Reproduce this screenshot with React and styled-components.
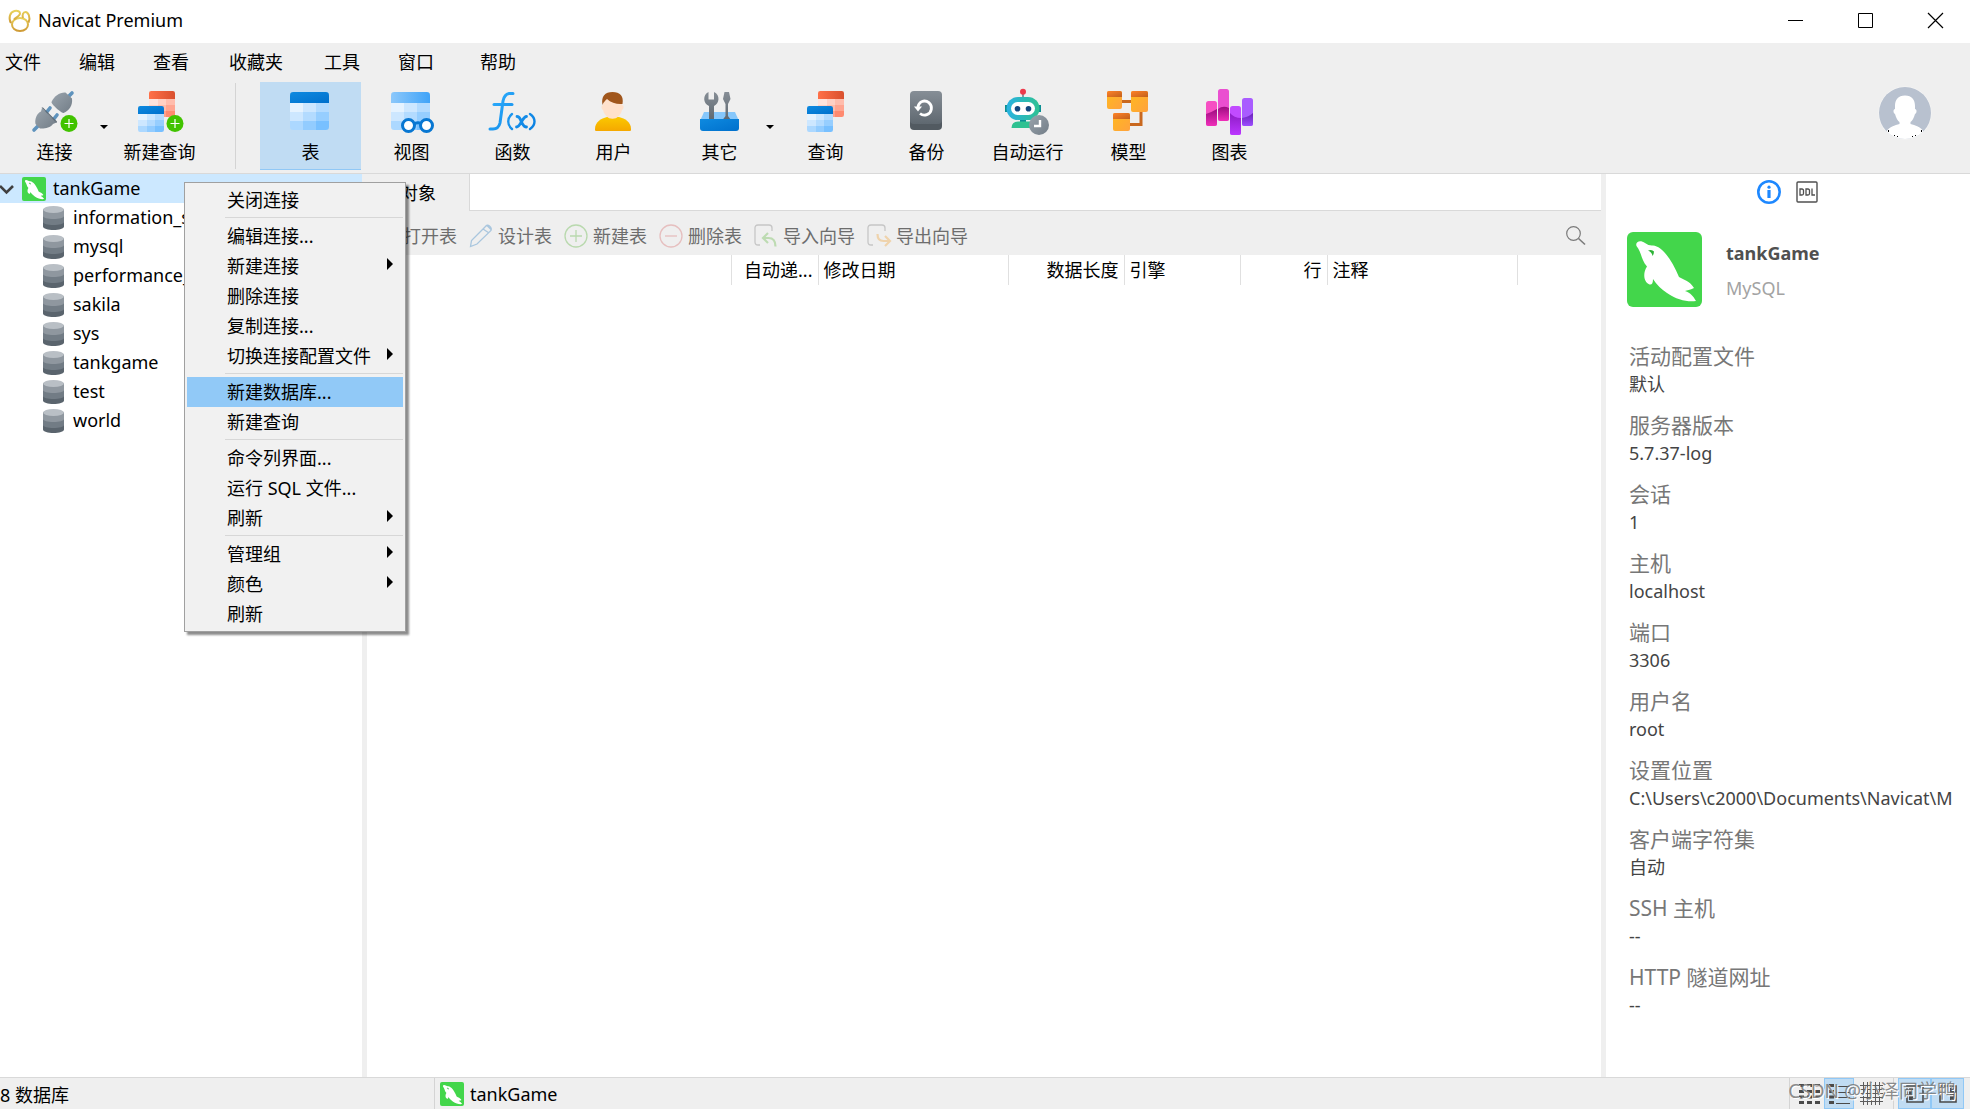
import React from "react";
import styled, { createGlobalStyle, css } from "styled-components";

const GlobalStyle = createGlobalStyle`
  *, *::before, *::after { box-sizing: border-box; }
  body {
    margin: 0;
    color: #000;
    background: #fff;
    font-family: "Noto Sans", "Noto Sans CJK SC", sans-serif;
    font-size: 18px;
    line-height: 24px;
  }
  button {
    font: inherit;
    color: inherit;
    background: none;
    border: 0;
    padding: 0;
    cursor: default;
  }
  ul, dl, dd, h2, p { margin: 0; padding: 0; }
  ul { list-style: none; }
  svg { display: block; overflow: visible; flex: none; }
`;

const Window = styled.div`
  display: flex;
  flex-direction: column;
  height: 100vh;
  overflow: hidden;
`;

/* ---------- title bar ---------- */

const TitleBar = styled.header`
  display: flex;
  align-items: center;
  height: 43px;
  flex: none;
  padding-left: 8px;
  gap: 6px;
  background: #fff;
`;

const AppName = styled.span`
  flex: 1;
  line-height: 40px;
  height: 43px;
`;

const WindowControls = styled.div`
  display: flex;
`;

const WindowButton = styled.button`
  display: grid;
  place-items: center;
  width: 70px;
  height: 43px;
  padding-bottom: 2px;
`;

/* ---------- menu bar and ribbon ---------- */

const MenuBar = styled.nav`
  display: grid;
  grid-template-columns: 74px 74px 76px 95px 74px 82px auto;
  justify-content: start;
  height: 39px;
  flex: none;
  padding-left: 5px;
  background: #efefef;
`;

const MenuBarItem = styled.button`
  text-align: left;
  line-height: 39px;
`;

const Ribbon = styled.div`
  display: flex;
  height: 92px;
  flex: none;
  padding-bottom: 3px;
  background: #efefef;
  border-bottom: 1px solid #d9d9d9;
`;

const RibbonButton = styled.button`
  position: relative;
  display: flex;
  flex-direction: column;
  align-items: center;
  gap: 5px;
  width: ${(p) => p.$width || 101}px;
  padding-top: 5px;
  white-space: nowrap;
  ${(p) =>
    p.$active &&
    css`
      background: #c0dcf3;
      box-shadow: inset 0 -1px #90c8f6;
    `}
`;

const Caret = styled.span`
  position: absolute;
  right: 1px;
  top: 43px;
  border: 4px solid transparent;
  border-top-color: #000;
  border-bottom: 0;
`;

const RibbonSeparator = styled.div`
  width: 50px;
  display: flex;
  justify-content: center;
  &::after {
    content: "";
    width: 1px;
    margin: 1px 0;
    background: #d4d4d4;
  }
`;

const Account = styled.button`
  margin: 0 38px 26px auto;
`;

/* ---------- workspace ---------- */

const Workspace = styled.div`
  display: flex;
  flex: 1;
  min-height: 0;
`;

const Sidebar = styled.aside`
  position: relative;
  width: 367px;
  flex: none;
  border-right: 5px solid #efefef;
`;

const ConnectionRow = styled.div`
  display: flex;
  align-items: center;
  height: 29px;
  line-height: 22px;
  background: #cce8ff;
`;

const ConnectionIcon = styled.span`
  margin: 0 7px 0 9px;
`;

const DatabaseRow = styled.li`
  display: flex;
  align-items: center;
  gap: 9px;
  height: 29px;
  padding-left: 43px;
`;

const RowText = styled.span`
  padding-bottom: 2px;
`;

const Main = styled.main`
  display: flex;
  flex-direction: column;
  flex: 1;
  min-width: 0;
`;

const TabStrip = styled.div`
  display: flex;
  height: 37px;
  flex: none;
`;

const Tab = styled.button`
  width: 102px;
  background: #efefef;
`;

const TabFiller = styled.div`
  flex: 1;
  border-left: 1px solid #d9d9d9;
  border-bottom: 1px solid #d9d9d9;
`;

const ObjectToolbar = styled.div`
  display: flex;
  align-items: center;
  gap: 12px;
  height: 44px;
  flex: none;
  padding: 6px 15px 0 7px;
  background: #efefef;
  color: #6d6d6d;
`;

const ObjectButton = styled.button`
  display: flex;
  align-items: center;
  gap: 5px;
  white-space: nowrap;
`;

const SearchButton = styled.button`
  margin-left: auto;
`;

const ObjectTable = styled.table`
  width: 100%;
  table-layout: fixed;
  border-collapse: collapse;
`;

const HeaderCell = styled.th`
  width: ${(p) => (p.$width ? `${p.$width}px` : "auto")};
  height: 30px;
  padding: 0 5px;
  font-weight: 400;
  line-height: 30px;
  text-align: ${(p) => p.$align || "left"};
  white-space: nowrap;
  border-right: ${(p) => (p.$width ? "1px solid #e0e0e0" : "0")};
`;

/* ---------- information pane ---------- */

const InfoPane = styled.aside`
  width: 369px;
  flex: none;
  border-left: 5px solid #efefef;
  overflow: hidden;
`;

const InfoTabs = styled.div`
  display: flex;
  justify-content: center;
  align-items: center;
  gap: 15px;
  height: 36px;
  padding-right: 2px;
`;

const Summary = styled.div`
  display: flex;
  gap: 24px;
  padding: 22px 0 0 21px;
`;

const SummaryName = styled.h2`
  padding-top: 3px;
  font-size: 18px;
  line-height: 36px;
  font-weight: 700;
  color: #505050;
`;

const SummaryKind = styled.p`
  line-height: 34px;
  color: #a3a3a3;
`;

const Details = styled.dl`
  display: grid;
  gap: 13px;
  padding: 35px 0 0 23px;
`;

const DetailLabel = styled.dt`
  font-size: 21px;
  line-height: 28px;
  color: #777;
`;

const DetailValue = styled.dd`
  line-height: 28px;
  color: #444;
  white-space: nowrap;
`;

/* ---------- status bar ---------- */

const StatusBar = styled.footer`
  position: relative;
  display: flex;
  height: 32px;
  flex: none;
  line-height: 34px;
  background: #efefef;
  border-top: 1px solid #d9d9d9;
`;

const StatusCount = styled.span`
  width: 434px;
`;

const StatusConnection = styled.span`
  display: flex;
  flex: 1;
  align-items: center;
  gap: 6px;
  padding-left: 5px;
  border-left: 1px solid #d4d4d4;
`;

const ViewSwitch = styled.div`
  display: flex;
  border-left: 1px solid #d4d4d4;
  padding: 0 ${(p) => p.$end || 4}px 0 4px;
`;

const ViewButton = styled.button`
  display: grid;
  place-items: center;
  width: ${(p) => p.$width || 30}px;
  ${(p) =>
    p.$active &&
    css`
      background: #c0dcf3;
      border: 1px solid #90c8f6;
    `}
`;

const Watermark = styled.span`
  position: absolute;
  right: 14px;
  top: -4px;
  font-size: 19px;
  color: rgba(110, 110, 110, 0.8);
  text-shadow: 1px 1px #fff;
  pointer-events: none;
`;

/* ---------- context menu ---------- */

const ContextMenu = styled.ul`
  position: absolute;
  z-index: 2;
  left: 184px;
  top: 8px;
  width: 222px;
  padding: 2px;
  background: #f1f1f1;
  border: 1px solid #a0a0a0;
  box-shadow: 3px 3px 2px rgba(0, 0, 0, 0.45);
`;

const ContextItem = styled.button`
  display: flex;
  align-items: center;
  justify-content: space-between;
  width: 100%;
  height: 30px;
  padding: 0 10px 0 40px;
  white-space: nowrap;
  background: ${(p) => (p.$active ? "#91c9f7" : "none")};
`;

const SubmenuArrow = styled.span`
  margin-bottom: 4px;
  border: 6px solid transparent;
  border-left-color: #000;
  border-right: 0;
`;

const ContextDivider = styled.li`
  height: 6px;
  margin-left: 38px;
  padding-top: 2px;
  &::after {
    content: "";
    display: block;
    height: 1px;
    background: #d7d7d7;
  }
`;

/* ---------- icons ---------- */

const GradientDefs = styled.svg`
  position: absolute;
`;

const Gradients = () => (
  <GradientDefs width="0" height="0" aria-hidden="true">
    <defs>
      <linearGradient id="gold" x1="0" y1="0" x2="0" y2="1">
        <stop offset="0" stopColor="#e9d25b" />
        <stop offset="1" stopColor="#cf9a35" />
      </linearGradient>
      <linearGradient id="steel" x1="0" y1="0" x2="1" y2="1">
        <stop offset="0" stopColor="#9aa4ad" />
        <stop offset="1" stopColor="#727d87" />
      </linearGradient>
      <linearGradient id="slate" x1="0" y1="0" x2="0" y2="1">
        <stop offset="0" stopColor="#868e96" />
        <stop offset="1" stopColor="#5f6870" />
      </linearGradient>
      <linearGradient id="blue" x1="0" y1="0" x2="1" y2="1">
        <stop offset="0" stopColor="#0e8ae0" />
        <stop offset="1" stopColor="#0070cc" />
      </linearGradient>
      <linearGradient id="sky" x1="0" y1="0" x2="1" y2="0">
        <stop offset="0" stopColor="#8cc8fb" />
        <stop offset="1" stopColor="#3fa3f8" />
      </linearGradient>
      <linearGradient id="red" x1="0" y1="0" x2="1" y2="0">
        <stop offset="0" stopColor="#ff7048" />
        <stop offset="1" stopColor="#d9502e" />
      </linearGradient>
      <linearGradient id="fx" gradientUnits="userSpaceOnUse" x1="0" y1="5" x2="46" y2="43">
        <stop offset="0" stopColor="#2fb0ff" />
        <stop offset="1" stopColor="#0a7fe0" />
      </linearGradient>
      <linearGradient id="shirt" x1="0" y1="0" x2="0" y2="1">
        <stop offset="0" stopColor="#fbc800" />
        <stop offset="1" stopColor="#f5a800" />
      </linearGradient>
      <linearGradient id="robot" x1="0" y1="0" x2="1" y2="0">
        <stop offset="0" stopColor="#29b2e2" />
        <stop offset="1" stopColor="#2fc191" />
      </linearGradient>
      <linearGradient id="amber" x1="0" y1="0" x2="1" y2="1">
        <stop offset="0" stopColor="#ffb91e" />
        <stop offset="1" stopColor="#ffa23e" />
      </linearGradient>
      <linearGradient id="rust" x1="0" y1="0" x2="1" y2="1">
        <stop offset="0" stopColor="#ff8229" />
        <stop offset="1" stopColor="#c2601c" />
      </linearGradient>
      <linearGradient id="magenta" x1="0" y1="0" x2="0" y2="1">
        <stop offset="0" stopColor="#9c0c80" />
        <stop offset="1" stopColor="#f02fba" />
      </linearGradient>
      <linearGradient id="violet" x1="0" y1="0" x2="0" y2="1">
        <stop offset="0" stopColor="#8d1cc4" />
        <stop offset="1" stopColor="#bb36ff" />
      </linearGradient>
      <linearGradient id="indigo" x1="0" y1="0" x2="0" y2="1">
        <stop offset="0" stopColor="#6a22b8" />
        <stop offset="1" stopColor="#9c4dff" />
      </linearGradient>
    </defs>
  </GradientDefs>
);

const Icon48 = ({ children }) => (
  <svg width="48" height="48" viewBox="0 0 48 48" fill="none" aria-hidden="true">
    {children}
  </svg>
);

const BLUES = ["#e6f3ff", "#cde7ff", "#b3dbff", "#cde7ff", "#b3dbff", "#96ceff", "#acd8ff", "#92ccff", "#78c0ff"];
const REDS = ["#ffe3dc", "#ffd0c4", "#ffbcac", "#ffd0c4", "#ffbcac", "#ffa591", "#ffbcac", "#ffa08b", "#ff8a70"];

const Grid = ({ id, x, y, w, h, head, headFill, cells }) => {
  const cw = w / 3;
  const ch = (h - head) / 3;
  return (
    <g>
      <clipPath id={id}>
        <rect x={x} y={y} width={w} height={h} rx={w / 12} />
      </clipPath>
      <g clipPath={`url(#${id})`} shapeRendering="crispEdges">
        {cells.map((c, i) => (
          <rect
            key={i}
            x={x + (i % 3) * cw}
            y={y + head + Math.floor(i / 3) * ch}
            width={cw}
            height={ch}
            fill={c}
          />
        ))}
        <rect x={x} y={y} width={w} height={head} fill={`url(#${headFill})`} />
      </g>
    </g>
  );
};

const PlusBadge = ({ x, y }) => (
  <g>
    <circle cx={x} cy={y} r="8.5" fill="#41c300" />
    <path d={`M${x - 4.5} ${y}h9M${x} ${y - 4.5}v9`} stroke="#fff" strokeWidth="1.2" />
  </g>
);

const ConnectIcon = () => (
  <Icon48>
    <g stroke="#5f93bd" strokeWidth="3.6" strokeLinecap="round">
      <path d="M41 6l-5 5M3 43l5-5M19 21l-4 5M26 28l-4 5" />
    </g>
    <path d="M20.500 15C23 9 29 5 34.500 5.500L41 11.500C42 18 38 24 32.500 26C30 26 20 17 20.500 15Z" fill="url(#steel)" />
    <path d="M11 21L25.500 35.500L22 37C19 41 13 42 9 41.500L4.500 37C3.500 32 6 26 10 24.500Z" fill="url(#steel)" />
    <path d="M10.500 20.500L12 20.500L26 34.500L25.500 36Z" fill="#606b75" />
    <PlusBadge x={38} y={36.5} />
  </Icon48>
);

const QueryTables = ({ x, id }) => (
  <g>
    <Grid id={`${id}r`} x={x + 11} y={4} w={26} h={26} head={8} headFill="red" cells={REDS} />
    <Grid id={`${id}b`} x={x} y={19} w={26} h={26} head={8} headFill="blue" cells={BLUES} />
  </g>
);

const NewQueryIcon = () => (
  <Icon48>
    <QueryTables x={2} id="nq" />
    <PlusBadge x={39} y={36.5} />
  </Icon48>
);

const QueryIcon = () => (
  <Icon48>
    <QueryTables x={5} id="q" />
  </Icon48>
);

const TableIcon = () => (
  <Icon48>
    <Grid id="tbl" x={3} y={5} w={39} h={38} head={11} headFill="blue" cells={BLUES} />
  </Icon48>
);

const ViewIcon = () => (
  <Icon48>
    <Grid id="vw" x={3} y={5} w={39} h={38} head={11} headFill="sky" cells={BLUES} />
    <g fill="#fff" stroke="#0877d2" strokeWidth="3">
      <path d="M26 37q4-2.500 8 0" fill="none" />
      <circle cx="20.500" cy="38.500" r="6" />
      <circle cx="38.500" cy="38.500" r="6" />
    </g>
  </Icon48>
);

const FunctionIcon = () => (
  <Icon48>
    <g stroke="url(#fx)" strokeWidth="3" strokeLinecap="round">
      <path d="M1 42h3c4 0 6-2 7-6l3-22c1-5 3-7 6-7.500h4" />
      <path d="M5 17.600h18" />
      <path d="M23 27c-5 4-5 11 0 15M41 27c6 4 6 11 0 15" strokeWidth="2.400" />
      <path d="M28 29.500c3 0 3 3 4.500 5.500s2 5 5 5M37.500 29.500c-4 0-6 10.500-10 10.500" strokeWidth="2.800" />
    </g>
  </Icon48>
);

const UserIcon = () => (
  <Icon48>
    <path d="M6 44c-1 0-1-1-1-2c0-7 6-10.500 12-12h12c6 1.500 12 5 12 12c0 1 0 2-1 2Z" fill="url(#shirt)" />
    <path d="M13 12h19v6c2 0 2 4 0 5c-1 4-3 6-4 6.500c-2 3-9 3-11 0c-1-.5-3-2.500-4-6.500c-2-1-2-5 0-5Z" fill="#ffe1cc" />
    <path d="M12.500 18C11 9 15 5 22.500 5S34 9 32.500 17C27 17.500 21 16 17 12C15 14 13.500 15 12.500 18Z" fill="#a0561c" />
  </Icon48>
);

const OthersIcon = () => (
  <Icon48>
    <path d="M8 25h31l4 9H4Z" fill="#86c7fb" />
    <path d="M13 33V19C7 16.500 6.500 8 12.500 5v7.500h5.500V5C24.500 8 23.500 16.500 18 19v14Z" fill="url(#slate)" />
    <path d="M28.500 5h4.500l1.500 7l-2.500 5v12l3 4h-8.500l3-4V17l-2.500-5Z" fill="url(#slate)" />
    <path d="M4 32h39v9q0 3-3 3H7q-3 0-3-3Z" fill="url(#blue)" />
  </Icon48>
);

const BackupIcon = () => (
  <Icon48>
    <rect x="7" y="6" width="32" height="37" rx="4" fill="#525a61" />
    <rect x="7" y="4" width="32" height="33" rx="4" fill="url(#slate)" />
    <path d="M19 14.500a7 7 0 1 1-2 12M15 22v-1.500a7 7 0 0 1 4-6" stroke="#fff" strokeWidth="2.800" />
    <path d="M11 19.500h8l-4 5Z" fill="#fff" />
  </Icon48>
);

const RobotIcon = () => (
  <Icon48>
    <path d="M19 6v6" stroke="#8a949c" strokeWidth="2" />
    <circle cx="19" cy="4.700" r="3" fill="#ee3a4b" />
    <path d="M1 18h4v7h-4zM33 18h4v7h-4zM16 30h6v5h-6z" fill="#0c8f93" />
    <path d="M7.500 41q0-6.500 7-6.500h14V41Z" fill="#2fc191" />
    <rect x="2.500" y="10" width="33" height="23" rx="11.500" fill="url(#robot)" />
    <rect x="7" y="15" width="24" height="13" rx="6.500" fill="#fff" />
    <circle cx="13.500" cy="21.700" r="2.800" fill="#12477f" />
    <circle cx="24.500" cy="21.700" r="2.800" fill="#12477f" />
    <circle cx="35" cy="38" r="10" fill="url(#steel)" />
    <path d="M36 33v6h-6" stroke="#fff" strokeWidth="2.400" />
  </Icon48>
);

const ModelBox = ({ x, y, w, h }) => (
  <g>
    <rect x={x} y={y} width={w} height={h} rx="2" fill="url(#amber)" />
    <path d={`M${x} ${y + 6}v-4q0-2 2-2h${w - 4}q2 0 2 2v4Z`} fill="url(#rust)" />
  </g>
);

const ModelIcon = () => (
  <Icon48>
    <path d="M17 14.500h10M36 24v13.500H25" stroke="#c9681f" strokeWidth="3" />
    <ModelBox x={2} y={4} w={15} h={18} />
    <ModelBox x={26} y={4} w={17} h={21} />
    <ModelBox x={8} y={26} w={17} h={18} />
  </Icon48>
);

const ChartIcon = () => (
  <Icon48>
    <rect x="0" y="14" width="11" height="25" rx="2.500" fill="#f64fc3" />
    <path d="M0 27q6-2 11-5v14.500q0 2.500-2.500 2.500h-6Q0 39 0 36.500Z" fill="url(#magenta)" />
    <rect x="12" y="2" width="11" height="32" rx="2.500" fill="#ea4fd0" />
    <path d="M12 22q5-4 11-1v10.500q0 2.500-2.500 2.500h-6q-2.500 0-2.500-2.500Z" fill="url(#magenta)" />
    <rect x="24" y="19" width="11" height="29" rx="2.500" fill="#c14bff" />
    <path d="M24 26q4 5 11 5v14.500q0 2.500-2.500 2.500h-6q-2.500 0-2.500-2.500Z" fill="url(#violet)" />
    <rect x="36" y="11" width="11" height="28" rx="2.500" fill="#a95cff" />
    <path d="M36 31q7-1 11-5v10.500q0 2.500-2.500 2.500h-6q-2.500 0-2.500-2.500Z" fill="url(#indigo)" />
  </Icon48>
);

const NavicatLogo = () => (
  <svg width="24" height="24" viewBox="0 1 24 24" fill="none" stroke="url(#gold)" strokeWidth="2" aria-hidden="true">
    <path d="M12 9c5 0 8 3 8 6.500s-3 6.500-8 6.500s-8-3-8-6.500s3-6.500 8-6.500Z" />
    <path d="M3 14C0 9 2 3 6.500 2c3.500-.6 5.500 .5 5.500 2.500S9 8 6 10.500M15 9c-1-3 0-6 2.500-6S23 8 20.500 13.500" />
  </svg>
);

const Dolphin = ({ size }) => (
  <svg width={size} height={size} viewBox="0 0 75 75" aria-hidden="true">
    <rect width="75" height="75" rx="6" fill="#43d64b" />
    <path
      d="M9.500 14C8 10 13 7.500 18 11Q22 14 26 13.500C35 14 45 28 52 45C57 48 63 49 67 56C63 58 60 58 58 59C64 61 66 64 69 69C60 70 50 68 40 61Q31 55 26 47C26 51 25 53 22.500 52.500C16 50 16 40 20 34.500C14 28 15 21 9.500 14Z"
      fill="#fff"
    />
    <path d="M21 18.500q4-1.500 6 1q0 2.500-1.500 4.500q-.5-4-4.500-5.500Z" fill="#2db336" />
  </svg>
);

const DatabaseIcon = () => (
  <svg width="21" height="24" viewBox="0 0 21 24" aria-hidden="true">
    <path d="M0 15v5.500C0 22.500 5 24 10.500 24S21 22.500 21 20.500V15Z" fill="#5a646d" />
    <path d="M0 9v7c0 2 5 3 10.500 3S21 18 21 16V9Z" fill="#727c85" />
    <path d="M0 3v7c0 2 5 3 10.500 3S21 12 21 10V3Z" fill="#8f979f" />
    <ellipse cx="10.500" cy="3.500" rx="10.500" ry="3.500" fill="#b9bfc5" />
  </svg>
);

const Icon24 = ({ color, children }) => (
  <svg width="24" height="24" viewBox="0 0 24 24" fill="none" stroke={color} strokeWidth="1.300" aria-hidden="true">
    {children}
  </svg>
);

const objectActions = [
  ["打开表", <Icon24 color="#a9c6de"><path d="M2 3h20v18H2zM2 9h20M9 9v12M16 9v12" /></Icon24>],
  ["设计表", <Icon24 color="#a9c6de"><path d="M1.500 22.500l1-6L16 3q2-3 4.500-1T22 6.500L8 20ZM14 5l6 4M18 1.500l4 4" /></Icon24>],
  ["新建表", <Icon24 color="#b9d9ae"><circle cx="12" cy="12" r="11" /><path d="M12 6v12M6 12h12" /></Icon24>],
  ["删除表", <Icon24 color="#e6bfbf"><circle cx="12" cy="12" r="11" /><path d="M6 12h12" /></Icon24>],
  ["导入向导", <Icon24 color="#c6c6c6"><path d="M6 21H4q-3 0-3-3V4q0-3 3-3h11q3 0 3 3v3" /><path d="M14 9l-5 5l5 5M9.500 14h5q7 0 7 8.500" stroke="#bddbb2" strokeWidth="2.200" /></Icon24>],
  ["导出向导", <Icon24 color="#c6c6c6"><path d="M6 21H4q-3 0-3-3V4q0-3 3-3h11q3 0 3 3v3" /><path d="M18 12l5 5l-5 5M22.500 17h-6q-6 0-6-7" stroke="#efd3ac" strokeWidth="2.200" /></Icon24>],
];

const ribbonTools = [
  ["表", TableIcon],
  ["视图", ViewIcon],
  ["函数", FunctionIcon],
  ["用户", UserIcon],
  ["其它", OthersIcon],
  ["查询", QueryIcon],
  ["备份", BackupIcon],
  ["自动运行", RobotIcon],
  ["模型", ModelIcon],
  ["图表", ChartIcon],
];

const databases = ["information_schema", "mysql", "performance_schema", "sakila", "sys", "tankgame", "test", "world"];

const contextEntries = [
  { label: "关闭连接" },
  null,
  { label: "编辑连接..." },
  { label: "新建连接", sub: true },
  { label: "删除连接" },
  { label: "复制连接..." },
  { label: "切换连接配置文件", sub: true },
  null,
  { label: "新建数据库...", active: true },
  { label: "新建查询" },
  null,
  { label: "命令列界面..." },
  { label: "运行 SQL 文件..." },
  { label: "刷新", sub: true },
  null,
  { label: "管理组", sub: true },
  { label: "颜色", sub: true },
  { label: "刷新" },
];

const columns = [
  ["", 364],
  ["自动递...", 87, "right"],
  ["修改日期", 190],
  ["数据长度", 116, "right"],
  ["引擎", 116],
  ["行", 87, "right"],
  ["注释", 190],
  ["", 0],
];

const details = [
  ["活动配置文件", "默认"],
  ["服务器版本", "5.7.37-log"],
  ["会话", "1"],
  ["主机", "localhost"],
  ["端口", "3306"],
  ["用户名", "root"],
  ["设置位置", "C:\\Users\\c2000\\Documents\\Navicat\\M"],
  ["客户端字符集", "自动"],
  ["SSH 主机", "--"],
  ["HTTP 隧道网址", "--"],
];

export default function App() {
  return (
    <Window>
      <GlobalStyle />
      <Gradients />
      <TitleBar>
        <NavicatLogo />
        <AppName>Navicat Premium</AppName>
        <WindowControls>
          <WindowButton aria-label="最小化">
            <svg width="15" height="15"><path d="M0 7.500h15" stroke="#000" /></svg>
          </WindowButton>
          <WindowButton aria-label="最大化">
            <svg width="15" height="15"><path d="M.5.5h14v14H.5z" fill="none" stroke="#000" /></svg>
          </WindowButton>
          <WindowButton aria-label="关闭">
            <svg width="15" height="15"><path d="M0 0l15 15M15 0L0 15" stroke="#000" strokeWidth="1.200" /></svg>
          </WindowButton>
        </WindowControls>
      </TitleBar>

      <MenuBar>
        {["文件", "编辑", "查看", "收藏夹", "工具", "窗口", "帮助"].map((m) => (
          <MenuBarItem key={m}>{m}</MenuBarItem>
        ))}
      </MenuBar>

      <Ribbon>
        <RibbonButton $width={109}>
          <ConnectIcon />
          连接
          <Caret />
        </RibbonButton>
        <RibbonButton>
          <NewQueryIcon />
          新建查询
        </RibbonButton>
        <RibbonSeparator />
        {ribbonTools.map(([label, Glyph]) => (
          <RibbonButton key={label} $active={label === "表"} $width={label === "其它" ? 111 : 101}>
            <Glyph />
            {label}
            {label === "其它" && <Caret />}
          </RibbonButton>
        ))}
        <Account aria-label="账户">
          <svg width="54" height="54" viewBox="0 0 54 54">
            <clipPath id="avatar"><circle cx="27" cy="27" r="26" /></clipPath>
            <circle cx="27" cy="27" r="26.500" fill="#f7f7f7" />
            <g clipPath="url(#avatar)">
              <rect width="54" height="54" fill="#b8c1cf" />
              <path
                d="M27 9.500C34 9.500 37 14 37 20V23C39 23 39 27 37 28C36 32 34 35 32.500 36V38C37 39 43 41 46 46V54H8V46C11 41 17 39 21.500 38V36C20 35 18 32 17 28C15 27 15 23 17 23V20C17 14 20 9.500 27 9.500Z"
                fill="#fff"
              />
            </g>
            <path d="M10 44h1v2h-1zM16 49h1v1h-1zM19 50h1v1h-1zM34 50h1v1h-1zM37 49h1v1h-1zM43 44h1v2h-1z" fill="#000" />
          </svg>
        </Account>
      </Ribbon>

      <Workspace>
        <Sidebar>
          <ConnectionRow>
            <svg width="13" height="14" viewBox="0 0 13 14" fill="none" stroke="#404040" strokeWidth="2.600">
              <path d="M0 4l6.500 6.500L13 4" />
            </svg>
            <ConnectionIcon><Dolphin size={24} /></ConnectionIcon>
            <RowText>tankGame</RowText>
          </ConnectionRow>
          <ul>
            {databases.map((d) => (
              <DatabaseRow key={d}>
                <DatabaseIcon />
                <RowText>{d}</RowText>
              </DatabaseRow>
            ))}
          </ul>
          <ContextMenu>
            {contextEntries.map((e, i) =>
              e ? (
                <li key={i}>
                  <ContextItem $active={e.active}>
                    {e.label}
                    {e.sub && <SubmenuArrow />}
                  </ContextItem>
                </li>
              ) : (
                <ContextDivider key={i} role="separator" />
              )
            )}
          </ContextMenu>
        </Sidebar>

        <Main>
          <TabStrip>
            <Tab>对象</Tab>
            <TabFiller />
          </TabStrip>
          <ObjectToolbar>
            {objectActions.map(([label, glyph]) => (
              <ObjectButton key={label}>
                {glyph}
                {label}
              </ObjectButton>
            ))}
            <SearchButton aria-label="搜索">
              <svg width="20" height="20" viewBox="0 0 20 20" fill="none" stroke="#7a7a7a" strokeWidth="1.200">
                <circle cx="7.500" cy="7.500" r="6.800" />
                <path d="M12.500 12.500l6.500 6" strokeWidth="1.600" />
              </svg>
            </SearchButton>
          </ObjectToolbar>
          <ObjectTable>
            <thead>
              <tr>
                {columns.map(([label, width, align], i) => (
                  <HeaderCell key={i} $width={width} $align={align}>
                    {label}
                  </HeaderCell>
                ))}
              </tr>
            </thead>
          </ObjectTable>
        </Main>

        <InfoPane>
          <InfoTabs>
            <button aria-label="常规">
              <svg width="24" height="24" viewBox="0 0 24 24" fill="none">
                <circle cx="12" cy="12" r="10.700" stroke="#1e88ff" strokeWidth="2.600" />
                <path d="M12 10v8" stroke="#1e88ff" strokeWidth="3.200" />
                <circle cx="12" cy="7.200" r="1.600" fill="#1e88ff" />
              </svg>
            </button>
            <button aria-label="DDL">
              <svg width="22" height="22" viewBox="0 0 22 22" fill="none" stroke="#505050">
                <rect x="1" y="1" width="20" height="20" rx="1" strokeWidth="1.400" />
                <path d="M4 8v6h2q1.500 0 1.500-1.500v-3Q7.500 8 6 8ZM10 8v6h2q1.500 0 1.500-1.500v-3Q13.500 8 12 8ZM16 7.500V14h3" strokeWidth="1.300" />
              </svg>
            </button>
          </InfoTabs>
          <Summary>
            <Dolphin size={75} />
            <div>
              <SummaryName>tankGame</SummaryName>
              <SummaryKind>MySQL</SummaryKind>
            </div>
          </Summary>
          <Details>
            {details.map(([label, value]) => (
              <div key={label}>
                <DetailLabel>{label}</DetailLabel>
                <DetailValue>{value}</DetailValue>
              </div>
            ))}
          </Details>
        </InfoPane>
      </Workspace>

      <StatusBar>
        <StatusCount>8 数据库</StatusCount>
        <StatusConnection>
          <Dolphin size={24} />
          tankGame
        </StatusConnection>
        <ViewSwitch>
          <ViewButton aria-label="图标">
            <svg width="21" height="20" fill="none" stroke="#4a4a4a" strokeWidth="3" strokeDasharray="5 3">
              <path d="M0 1.500h21M0 7.500h21M0 13h21M0 18.500h21" />
            </svg>
          </ViewButton>
          <ViewButton $active aria-label="列表">
            <svg width="21" height="20" fill="none" stroke="#4a4a4a">
              <path d="M0 1.500h5M0 7.500h5M0 13h5M0 18.500h5" strokeWidth="3" />
              <path d="M7 2.500h14M7 8.500h14M7 13.500h14M7 19.500h14" />
            </svg>
          </ViewButton>
          <ViewButton $width={35} aria-label="详细信息">
            <svg width="23" height="23" fill="none" stroke="#5c5c5c">
              <path d="M0 3.500h23M0 7.500h23M0 11.500h23M0 15.500h23M0 19.500h23M3.500 0v23M7.500 0v23M11.500 0v23M15.500 0v23M19.500 0v23" />
            </svg>
          </ViewButton>
        </ViewSwitch>
        <ViewSwitch $end={6}>
          <ViewButton $width={33} $active aria-label="左窗格">
            <svg width="18" height="18" fill="none" stroke="#4a4a4a">
              <path d="M1 1h16v16H1z" strokeWidth="1.600" />
              <path d="M5 3v12" strokeWidth="4" />
            </svg>
          </ViewButton>
          <ViewButton $width={33} $active aria-label="右窗格">
            <svg width="18" height="18" fill="none" stroke="#4a4a4a">
              <path d="M1 1h16v16H1z" strokeWidth="1.600" />
              <path d="M13 3v12" strokeWidth="4" />
            </svg>
          </ViewButton>
        </ViewSwitch>
        <Watermark>CSDN @小泽同学鸭</Watermark>
      </StatusBar>
    </Window>
  );
}
